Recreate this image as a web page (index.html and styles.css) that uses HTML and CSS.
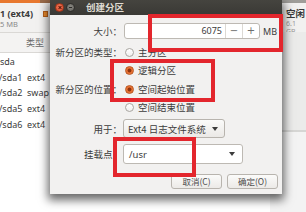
FILE: index.html
```html
<!DOCTYPE html>
<html lang="zh">
<head>
<meta charset="utf-8">
<link rel="stylesheet" href="styles.css">
</head>
<body>
<div class="desk">
  <div class="win-left">
    <div class="lw-bar"></div>
    <div class="lw-head">
      <div class="lw-name">
        <div class="lw-title">1 (ext4)</div>
        <div class="lw-size">5 MB</div>
      </div>
      <span class="swatch"></span>
    </div>
    <div class="lw-cols"><span class="col-type">类型</span></div>
    <div class="lw-list">
      <div class="lw-row"><span class="dev">sda</span></div>
      <div class="lw-row"><span class="dev sub">/sda1</span><span class="fs">ext4</span></div>
      <div class="lw-row"><span class="dev sub">/sda2</span><span class="fs">swap</span></div>
      <div class="lw-row"><span class="dev sub">/sda5</span><span class="fs">ext4</span></div>
      <div class="lw-row"><span class="dev sub">/sda6</span><span class="fs">ext4</span></div>
    </div>
  </div>

  <div class="win-right">
    <div class="rw-bar"></div>
    <div class="rw-head">
      <div class="rw-title">空闲</div>
      <div class="rw-size">6.1 GB</div>
    </div>
    <div class="rw-body"></div>
  </div>

  <div class="dialog">
    <div class="titlebar">
      <span class="wbtn close"></span>
      <span class="wbtn min"></span>
      <span class="title">创建分区</span>
    </div>
    <div class="dbody">
      <div class="row r1">
        <span class="lbl">大小：</span>
        <div class="spin">
          <span class="spin-val">6075</span>
          <span class="spin-btn">−</span>
          <span class="spin-btn">+</span>
        </div>
        <span class="unit">MB</span>
      </div>
      <div class="row r2">
        <span class="lbl">新分区的类型：</span>
        <span class="radio"></span><span class="rtext">主分区</span>
      </div>
      <div class="row r3">
        <span class="lbl"></span>
        <span class="radio on"></span><span class="rtext">逻辑分区</span>
      </div>
      <div class="row r4">
        <span class="lbl">新分区的位置：</span>
        <span class="radio on"></span><span class="rtext">空间起始位置</span>
      </div>
      <div class="row r5">
        <span class="lbl"></span>
        <span class="radio"></span><span class="rtext">空间结束位置</span>
      </div>
      <div class="row r6">
        <span class="lbl">用于：</span>
        <div class="combo">
          <span class="combo-text">Ext4 日志文件系统</span>
          <span class="arrow"></span>
        </div>
      </div>
      <div class="row r7">
        <span class="lbl">挂载点：</span>
        <div class="centry">
          <span class="centry-text">/usr</span>
          <span class="arrow"></span>
        </div>
      </div>
      <div class="buttons">
        <span class="btn">取消(C)</span>
        <span class="btn">确定(O)</span>
      </div>
    </div>
  </div>

  <div class="mark m1"></div>
  <div class="mark m2"></div>
  <div class="mark m3"></div>
</div>
</body>
</html>
```

FILE: styles.css
```css
* { box-sizing: border-box; }
html, body { margin: 0; padding: 0; }
body {
  width: 306px;
  height: 212px;
  overflow: hidden;
  font-family: "Noto Sans", "Noto Sans CJK SC", sans-serif;
  color: #3c3c3c;
  background: #ffffff;
}
.desk {
  position: relative;
  width: 306px;
  height: 212px;
  overflow: hidden;
  background: #ffffff;
}

/* left background window */
.win-left {
  position: absolute;
  left: 0;
  top: 0;
  width: 80px;
  height: 212px;
  background: #ffffff;
  display: flex;
  flex-direction: column;
}
.lw-bar { height: 3px; background: linear-gradient(90deg, #e8782f 0 40px, #9a6b4a 40px); }
.lw-head {
  height: 29px;
  background: #f2f1f0;
  display: flex;
  align-items: flex-start;
  padding-top: 5px;
}
.lw-name { width: 43px; }
.lw-title { font-size: 9px; font-weight: 700; line-height: 11px; color: #3a3a3a; }
.lw-size { font-size: 7.5px; line-height: 9px; color: #8a8a8a; margin-top: 1px; }
.swatch {
  width: 5px;
  height: 6px;
  margin-top: 3px;
  background: #e98a2c;
  border: 1px solid #b8601a;
}
.lw-cols {
  height: 21px;
  background: #f4f3f2;
  border-top: 1px solid #dad8d5;
  border-bottom: 1px solid #dad8d5;
  display: flex;
  align-items: center;
  padding-left: 26px;
}
.col-type { font-size: 9px; color: #6a6a6a; }
.lw-list { background: #ffffff; padding-top: 1px; }
.lw-row {
  height: 15.6px;
  display: flex;
  align-items: center;
  font-size: 9px;
  color: #3a3a3a;
}
.dev { width: 27px; }
.dev.sub { margin-left: -1px; width: 28px; }

/* right background window */
.win-right {
  position: absolute;
  left: 270px;
  top: 0;
  width: 36px;
  height: 212px;
  background: #efeeed;
  display: flex;
  flex-direction: column;
}
.rw-bar { height: 3px; background: #9f9d99; }
.rw-head {
  height: 29px;
  padding-left: 16px;
  padding-top: 5px;
  background: #f2f1f0;
}
.rw-title { font-size: 9.5px; font-weight: 700; line-height: 12px; color: #3a3a3a; }
.rw-size { font-size: 7px; line-height: 8px; color: #9a9a9a; }
.rw-body {
  flex: 1;
  background: linear-gradient(180deg, #ebebea 0 98px, #d6d6d4 98px 100px, #f3f3f3 100px);
}

/* dialog */
.dialog {
  position: absolute;
  left: 50px;
  top: 0;
  width: 232px;
  height: 194px;
  background: #f2f1f0;
  box-shadow: 0 4px 9px 2px rgba(0, 0, 0, 0.6);
}
.titlebar {
  height: 15px;
  background: linear-gradient(180deg, #45443f, #3a3935);
  display: flex;
  align-items: center;
  padding-left: 5px;
}
.wbtn {
  width: 9px;
  height: 9px;
  border-radius: 50%;
  position: relative;
}
.wbtn.close {
  background: radial-gradient(circle at 50% 40%, #f07a5a, #d8492a);
  border: 1px solid #a03418;
}
.wbtn.close::before, .wbtn.close::after {
  content: "";
  position: absolute;
  left: 1.5px;
  top: 3px;
  width: 4px;
  height: 1px;
  background: #5a1a0c;
  transform: rotate(45deg);
}
.wbtn.close::after { transform: rotate(-45deg); }
.wbtn.min {
  margin-left: 2px;
  background: radial-gradient(circle at 50% 40%, #8a8983, #5f5e59);
  border: 1px solid #2f2e2b;
}
.wbtn.min::before {
  content: "";
  position: absolute;
  left: 2px;
  top: 3px;
  width: 3px;
  height: 1px;
  background: #2b2a27;
}
.title {
  margin-left: 11px;
  font-family: "Noto Sans CJK SC", sans-serif;
  font-size: 9.5px;
  font-weight: 700;
  color: #dfdbd2;
  line-height: 15px;
}

.dbody {
  padding: 8px 4px 0 0;
  font-family: "Noto Sans CJK SC", "Noto Sans", sans-serif;
  font-size: 9.5px;
}
.row { display: flex; align-items: center; }
.lbl {
  width: 72px;
  flex: none;
  text-align: right;
  white-space: nowrap;
  color: #3c3c3c;
  line-height: 12px;
}
.r1 { height: 16px; }
.r2 { height: 18px; margin-top: 4px; }
.r3 { height: 18px; }
.r4 { height: 18px; margin-top: 1px; }
.r5 { height: 18px; }
.r6 { height: 19px; margin-top: 3px; }
.r7 { height: 20px; margin-top: 6px; }

.spin {
  margin-left: 2px;
  width: 136px;
  height: 16px;
  background: #ffffff;
  border: 1px solid #bdb9b3;
  border-radius: 3px;
  display: flex;
  align-items: stretch;
}
.spin-val {
  flex: 1;
  text-align: right;
  padding-right: 3px;
  font-family: "Noto Sans", sans-serif;
  font-size: 9px;
  line-height: 14px;
  color: #3c3c3c;
}
.spin-btn {
  width: 17px;
  border-left: 1px solid #dcd9d4;
  text-align: center;
  font-family: "DejaVu Sans", sans-serif;
  font-size: 10px;
  line-height: 14px;
  color: #6e6e6e;
}
.unit {
  margin-left: 3px;
  font-family: "Noto Sans", sans-serif;
  font-size: 9px;
  color: #3c3c3c;
}

.radio {
  margin-left: 3px;
  width: 9px;
  height: 9px;
  border-radius: 50%;
  background: linear-gradient(180deg, #ffffff, #f0efee);
  border: 1px solid #a9a6a1;
  flex: none;
}
.radio.on {
  background: radial-gradient(circle, #8c3510 0 1.6px, #e0662a 2.2px, #f08a4a 4px);
  border: 1px solid #b8531f;
}
.rtext { margin-left: 4px; color: #3c3c3c; line-height: 12px; }

.combo {
  margin-left: 1px;
  width: 102px;
  height: 19px;
  border: 1px solid #b8b4ae;
  border-radius: 3px;
  background: linear-gradient(180deg, #fbfbfa, #ebe9e6);
  display: flex;
  align-items: center;
  padding-left: 4px;
}
.combo-text { flex: 1; white-space: nowrap; color: #3c3c3c; }
.arrow {
  width: 0;
  height: 0;
  border-left: 3px solid transparent;
  border-right: 3px solid transparent;
  border-top: 4px solid #3c3c3c;
  margin-right: 6px;
}
.centry {
  margin-left: 1px;
  width: 120px;
  height: 20px;
  border: 1px solid #bdb9b3;
  border-radius: 3px;
  background: #ffffff;
  display: flex;
  align-items: center;
  padding-left: 5px;
}
.centry-text { flex: 1; font-family: "Noto Sans", sans-serif; font-size: 9.5px; color: #3c3c3c; }
.centry .arrow { margin-right: 7px; }

.buttons {
  display: flex;
  justify-content: flex-end;
  gap: 5px;
  margin-top: 10px;
}
.btn {
  width: 51px;
  height: 15px;
  border: 1px solid #b8b4ae;
  border-radius: 3px;
  background: linear-gradient(180deg, #fbfbfa, #eceae7);
  text-align: center;
  font-size: 8.5px;
  line-height: 13px;
  color: #4a4a4a;
}

/* red annotation boxes drawn on top */
.mark {
  position: absolute;
  border: 4px solid #e3262d;
}
.m1 { left: 148px; top: 14px; width: 135px; height: 38px; }
.m2 { left: 110px; top: 59px; width: 105px; height: 43px; }
.m3 { left: 113px; top: 137px; width: 83px; height: 40px; }
```
